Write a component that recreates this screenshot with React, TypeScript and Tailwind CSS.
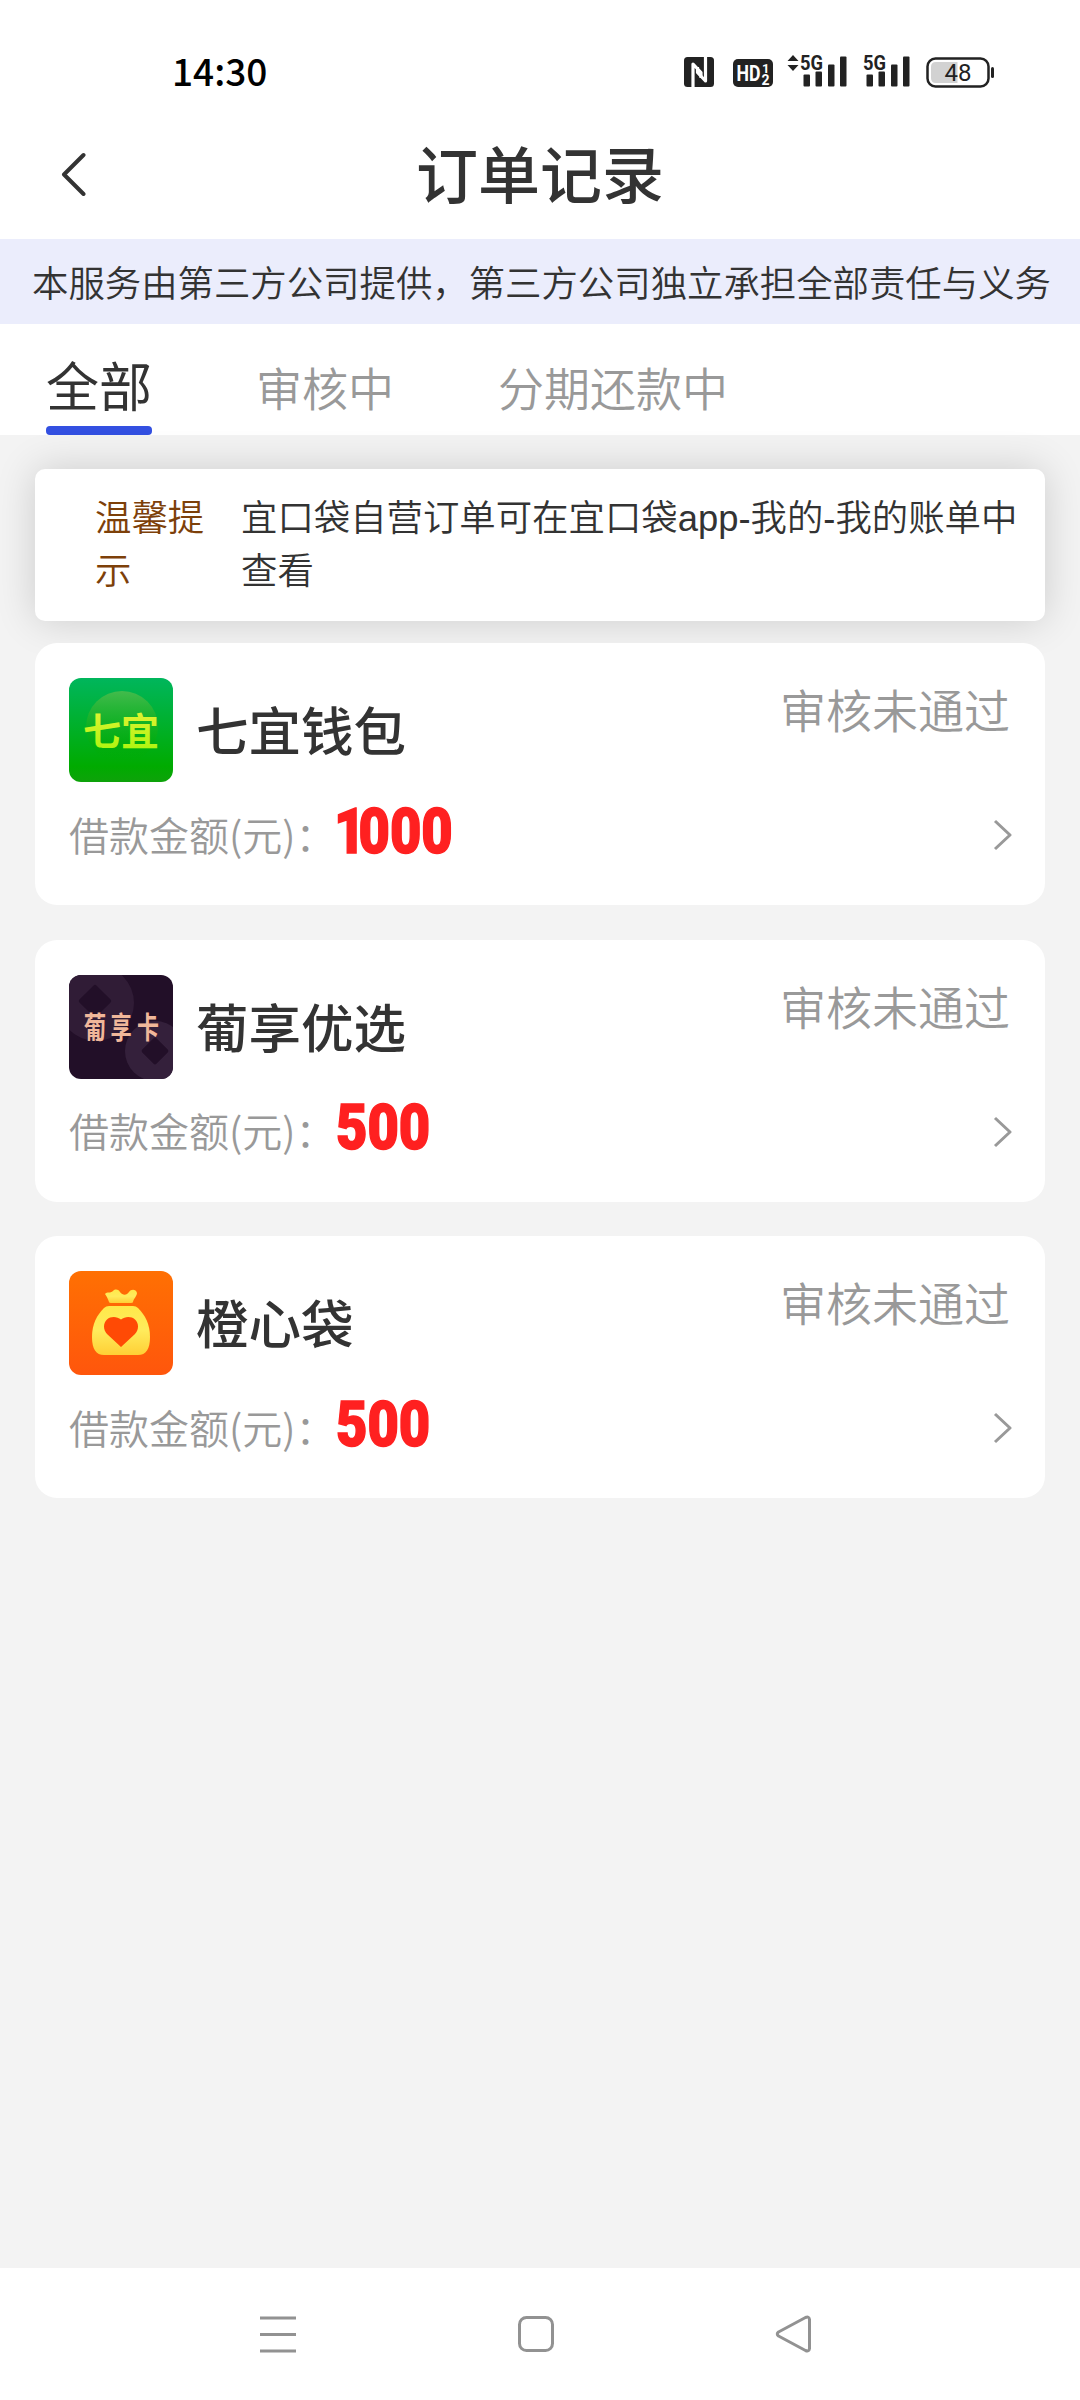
import type { ReactNode } from 'react';

const tabs = [
  { label: '全部', active: true },
  { label: '审核中', active: false },
  { label: '分期还款中', active: false },
];

const orders = [
  { name: '七宜钱包', status: '审核未通过', amount: '1000', logo: <QiyiLogo /> },
  { name: '葡享优选', status: '审核未通过', amount: '500', logo: <PuxiangLogo /> },
  { name: '橙心袋', status: '审核未通过', amount: '500', logo: <BagLogo /> },
];

function QiyiLogo() {
  return (
    <svg viewBox="0 0 104 104" className="size-full">
      <defs>
        <linearGradient id="qiyi-bg" x1="0" y1="0" x2="0" y2="1">
          <stop offset="0" stopColor="#00b65c" />
          <stop offset="0.85" stopColor="#00ab00" />
          <stop offset="1" stopColor="#0ea20a" />
        </linearGradient>
        <linearGradient id="qiyi-disc" x1="0" y1="0" x2="0" y2="1">
          <stop offset="0" stopColor="#43bb4c" />
          <stop offset="0.75" stopColor="#05ab04" stopOpacity="0.4" />
          <stop offset="1" stopColor="#00ab00" stopOpacity="0" />
        </linearGradient>
        <linearGradient id="qiyi-text" x1="0" y1="0" x2="0" y2="1">
          <stop offset="0" stopColor="#eef23c" />
          <stop offset="1" stopColor="#a6f50a" />
        </linearGradient>
      </defs>
      <rect width="104" height="104" fill="url(#qiyi-bg)" />
      <circle cx="53" cy="49" r="36" fill="url(#qiyi-disc)" />
      <text
        x="14"
        y="67"
        fill="url(#qiyi-text)"
        fontSize="38"
        className="font-['Noto_Sans_CJK_SC',sans-serif] font-bold"
      >
        七宜
      </text>
    </svg>
  );
}

function PuxiangLogo() {
  return (
    <svg viewBox="0 0 104 104" className="size-full">
      <rect width="104" height="104" fill="#220f28" />
      <circle cx="27" cy="28" r="38" fill="#301c36" />
      <rect x="14" y="14" width="24" height="24" rx="2" transform="rotate(45 26 26)" fill="#220f28" />
      <circle cx="86" cy="76" r="30" fill="#34203b" />
      <rect x="76" y="66" width="20" height="20" rx="2" transform="rotate(45 86 76)" fill="#220f28" />
      <g
        fill="#f0b79a"
        fontSize="25"
        textAnchor="middle"
        className="font-['Noto_Sans_CJK_SC',sans-serif] font-bold"
      >
        <text transform="translate(26 63) scale(0.9 1.2)">葡</text>
        <text transform="translate(52 63) scale(0.85 1.2)">享</text>
        <text transform="translate(79 63) scale(0.88 1.2)">卡</text>
      </g>
    </svg>
  );
}

function BagLogo() {
  return (
    <svg viewBox="0 0 104 104" className="size-full">
      <defs>
        <linearGradient id="bag-bg" x1="0" y1="0" x2="0" y2="1">
          <stop offset="0" stopColor="#ff7003" />
          <stop offset="1" stopColor="#ff560c" />
        </linearGradient>
        <linearGradient id="bag-body" x1="0" y1="0" x2="0" y2="1">
          <stop offset="0" stopColor="#ffe84a" />
          <stop offset="0.5" stopColor="#ffeb5c" />
          <stop offset="1" stopColor="#ffcf35" />
        </linearGradient>
      </defs>
      <rect width="104" height="104" fill="url(#bag-bg)" />
      <path
        d="M36 23C38 20 41 23 44 20C46 18 49 18 51 21C54 25 58 24 60 21C62 18 67 18 68 22C68 25 65 27 64 31Q64 32 62 32H42Q40 32 40 31C39 28 38 26 36 23Z"
        fill="url(#bag-body)"
      />
      <path
        d="M40 35H64Q67 35 69 37C76 44 81 53 81 66C81 78 77 84 69 84H35C27 84 23 78 23 66C23 53 28 44 35 37Q37 35 40 35Z"
        fill="url(#bag-body)"
      />
      <path
        d="M52 76L38 63C34 59 34 52 38 48.500C42 45 48 45.500 52 48.500C56 45.500 62 45 66 48.500C70 52 70 59 66 63Z"
        fill="#ff4a05"
      />
    </svg>
  );
}

function SignalIcon() {
  return (
    <svg width="50" height="44" viewBox="0 -10 50 44" fill="#222" className="-mt-[10px]">
      <text
        x="0"
        y="17"
        fontSize="21"
        textLength="23"
        lengthAdjust="spacingAndGlyphs"
        className="font-[Roboto,sans-serif] font-bold"
      >
        5G
      </text>
      <rect x="3.500" y="21.500" width="6.500" height="12" rx="1" />
      <rect x="15.500" y="18.500" width="6.500" height="15" rx="1" />
      <rect x="28" y="11.500" width="6.500" height="22" rx="1" />
      <rect x="40" y="3.500" width="6.500" height="30" rx="1" />
    </svg>
  );
}

function StatusBar() {
  return (
    <div className="flex h-[110px] items-start pt-[53px] pl-[172px] pr-[85px]">
      <span className="-mt-[3px] h-[40px] text-[37px] leading-[40px] font-medium text-black">14:30</span>
      <div className="ml-auto flex h-[34px] items-start">
        <svg width="30" height="34" viewBox="0 0 30 34" className="mr-[19px]">
          <rect y="4" width="30" height="30" rx="3.500" fill="#222" />
          <path d="M9 34V11L17 19.500V25" fill="none" stroke="#fff" strokeWidth="3.200" strokeLinejoin="round" />
          <path d="M21.500 4V28L13.500 19.500V14" fill="none" stroke="#fff" strokeWidth="3.200" strokeLinejoin="round" />
        </svg>
        <svg width="40" height="34" viewBox="0 0 40 34" className="mr-[14px]">
          <rect y="6" width="40" height="28" rx="5" fill="#222" />
          <g fill="#fff" className="font-[Roboto,sans-serif] font-bold">
            <text x="3.500" y="28" fontSize="22" textLength="24" lengthAdjust="spacingAndGlyphs">
              HD
            </text>
            <text x="29" y="20" fontSize="13">
              1
            </text>
            <text x="28.500" y="31.500" fontSize="14">
              2
            </text>
          </g>
        </svg>
        <svg width="12" height="34" viewBox="0 0 12 34" className="mr-[1px]" fill="#222">
          <path d="M0.500 8L6 2L11.500 8ZM0.500 12L6 18L11.500 12Z" />
        </svg>
        <div className="mr-[13px]">
          <SignalIcon />
        </div>
        <div className="mr-[13px]">
          <SignalIcon />
        </div>
        <svg width="69" height="36" viewBox="0 0 69 36">
          <rect x="1.500" y="5.500" width="61" height="28" rx="8" fill="none" stroke="#222" strokeWidth="2.500" />
          <path d="M10 9H31.500V30H10Q5 30 5 25V14Q5 9 10 9Z" fill="#d2d2d2" />
          <rect x="65" y="14" width="3" height="11" rx="1.500" fill="#222" />
          <text
            x="32"
            y="28"
            fontSize="24"
            textAnchor="middle"
            fill="#222"
            className="font-[Roboto,sans-serif] font-normal"
          >
            48
          </text>
        </svg>
      </div>
    </div>
  );
}

function NavButton({ children }: { children: ReactNode }) {
  return (
    <button className="flex w-[258px] items-center justify-center">
      <svg
        width="38"
        height="38"
        viewBox="0 0 38 38"
        fill="none"
        stroke="#929292"
        strokeWidth="3"
        strokeLinejoin="round"
      >
        {children}
      </svg>
    </button>
  );
}

export default function App() {
  return (
    <div className="flex h-[2400px] w-[1080px] flex-col overflow-hidden bg-[#f3f3f3] font-['Noto_Sans_CJK_SC',sans-serif] font-[350] text-[#333]">
      <div className="bg-white">
        <StatusBar />
        <header className="grid h-[129px] grid-cols-[1fr_auto_1fr] items-center">
          <svg width="27" height="44" viewBox="0 0 27 44" className="mb-[2px] ml-[60px]">
            <path
              d="M23.500 3L4 22.500L23.500 42"
              fill="none"
              stroke="#333"
              strokeWidth="4"
              strokeLinecap="round"
              strokeLinejoin="round"
            />
          </svg>
          <h1 className="h-[129px] text-[62px] leading-[124px] font-medium">订单记录</h1>
        </header>
      </div>

      <p className="h-[85px] bg-[#ebedfc] pl-[32px] text-[36.400px] leading-[84px] whitespace-nowrap">
        本服务由第三方公司提供，第三方公司独立承担全部责任与义务
      </p>

      <nav className="flex h-[111px] gap-[104px] bg-white pl-[46px]">
        {tabs.map((tab) => (
          <button
            key={tab.label}
            className={
              tab.active
                ? 'flex flex-col justify-between text-[53px] leading-[102px] font-normal text-[#333]'
                : 'flex flex-col text-[46px] leading-[124px] text-[#999]'
            }
          >
            <span className={tab.active ? 'h-[102px] pt-[9px]' : 'h-[111px]'}>{tab.label}</span>
            {tab.active && <i className="h-[9px] w-full rounded-[4px] bg-[#3350e1]" />}
          </button>
        ))}
      </nav>

      <main className="flex flex-1 flex-col px-[35px] pt-[34px]">
        <section className="flex h-[152px] rounded-[10px] bg-white pt-[20px] pl-[60px] text-[36.400px] leading-[53px] shadow-[0_0_40px_rgba(0,0,0,0.16)]">
          <span className="w-[146px] pr-[30px] text-[#7d4009]">温馨提示</span>
          <p className="w-[780px] pt-[3px] font-['Liberation_Sans','Noto_Sans_CJK_SC',sans-serif]">
            宜口袋自营订单可在宜口袋app-我的-我的账单中查看
          </p>
        </section>

        <ul className="relative mt-[22px] flex flex-col gap-[34.500px]">
          {orders.map((order) => (
            <li key={order.name} className="h-[262px] rounded-[22px] bg-white px-[34px] pt-[35px]">
              <div className="flex h-[104px]">
                <div className="size-[104px] overflow-hidden rounded-[12px]">{order.logo}</div>
                <h2 className="ml-[23px] text-[52.500px] leading-[100px] font-medium">{order.name}</h2>
                <span className="mr-px ml-auto text-[46px] leading-[60px] text-[#999]">{order.status}</span>
              </div>
              <div className="flex h-[106px] items-center text-[40px] text-[#999]">
                <span className="mb-[3px]">借款金额(元)：</span>
                <strong
                  className={`mb-[8px] inline-block origin-left scale-x-[0.86] font-[Roboto,sans-serif] text-[63px] leading-none font-black text-[#ff2020] [-webkit-text-stroke:1.500px_#ff2020] ${
                    order.amount.startsWith('1') ? '-ml-px first-letter:tracking-[-8px]' : 'ml-px'
                  }`}
                >
                  {order.amount}
                </strong>
                <svg width="20" height="32" viewBox="0 0 20 32" className="mr-[-1px] ml-auto">
                  <path d="M3 2L18 16L3 30" fill="none" stroke="#999" strokeWidth="3" strokeLinejoin="round" />
                </svg>
              </div>
            </li>
          ))}
        </ul>
      </main>

      <footer className="flex h-[132px] justify-center bg-white pr-[8px]">
        <NavButton>
          <path d="M1 3H37M1 19.500H37M1 36H37" />
        </NavButton>
        <NavButton>
          <rect x="2.500" y="2.500" width="33" height="33" rx="7" />
        </NavButton>
        <NavButton>
          <path d="M3.500 17L30.500 2.500Q34 1 34.500 4.500V33.500Q34 37 30.500 35.500L3.500 21Q1 19 3.500 17Z" />
        </NavButton>
      </footer>
    </div>
  );
}
